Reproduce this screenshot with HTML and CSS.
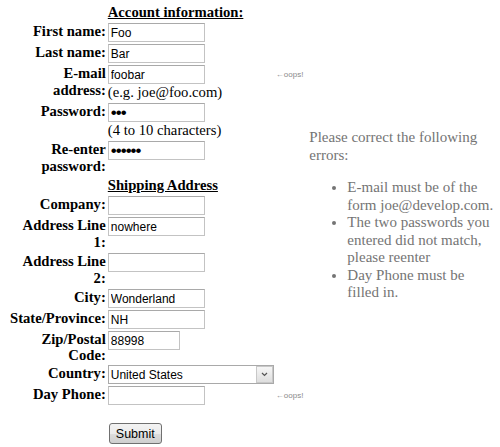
FILE: index.html
```html
<!DOCTYPE html>
<html>
<head>
<meta charset="utf-8">
<title>Signup</title>
<link rel="stylesheet" href="styles.css">
</head>
<body>
<div class="page">
  <form class="form">
    <h2 class="section">Account information:</h2>

    <label class="lbl">First name:</label>
    <div class="field"><input class="txt" type="text" value="Foo"></div>

    <label class="lbl">Last name:</label>
    <div class="field"><input class="txt" type="text" value="Bar"></div>

    <label class="lbl">E-mail address:</label>
    <div class="field"><input class="txt" type="text" value="foobar"><div class="hint">(e.g. joe@foo.com)</div></div>
    <div class="oops">&larr;oops!</div>

    <label class="lbl">Password:</label>
    <div class="field"><input class="txt pw" type="password" value="abc"><div class="hint">(4 to 10 characters)</div></div>

    <label class="lbl">Re-enter password:</label>
    <div class="field"><input class="txt pw" type="password" value="abcdef"></div>

    <h2 class="section">Shipping Address</h2>

    <label class="lbl">Company:</label>
    <div class="field"><input class="txt" type="text" value=""></div>

    <label class="lbl">Address Line 1:</label>
    <div class="field"><input class="txt" type="text" value="nowhere"></div>

    <label class="lbl">Address Line 2:</label>
    <div class="field"><input class="txt" type="text" value=""></div>

    <label class="lbl">City:</label>
    <div class="field"><input class="txt" type="text" value="Wonderland"></div>

    <label class="lbl">State/Province:</label>
    <div class="field"><input class="txt" type="text" value="NH"></div>

    <label class="lbl tight">Zip/Postal Code:</label>
    <div class="field"><input class="txt zip" type="text" value="88998"></div>

    <label class="lbl">Country:</label>
    <div class="field">
      <div class="selectwrap">
        <select class="sel"><option>United States</option></select>
        <span class="selbtn"><svg width="7" height="5" viewBox="0 0 7 5"><path d="M1 1 L3.5 3.5 L6 1" fill="none" stroke="#555" stroke-width="1.2"/></svg></span>
      </div>
    </div>

    <label class="lbl">Day Phone:</label>
    <div class="field"><input class="txt" type="text" value=""></div>
    <div class="oops">&larr;oops!</div>

    <div class="field submitrow"><button class="btn" type="button">Submit</button></div>
  </form>

  <div class="errors">
    <p class="errhead">Please correct the following errors:</p>
    <ul class="errlist">
      <li>E-mail must be of the form joe@develop.com.</li>
      <li>The two passwords you entered did not match, please reenter</li>
      <li>Day Phone must be filled in.</li>
    </ul>
  </div>
</div>
</body>
</html>
```

FILE: styles.css
```css
html, body {
  margin: 0;
  padding: 0;
  background: #ffffff;
}

body {
  font-family: "Liberation Serif", "Times New Roman", serif;
  font-size: 14.67px;
  color: #000;
}

.page {
  display: flex;
  align-items: flex-start;
  padding: 4px 0 0 10px;
}

.form {
  display: grid;
  grid-template-columns: min-content 166px auto;
  column-gap: 2px;
  row-gap: 2px;
  margin: 0;
}

.section {
  grid-column: 2 / span 2;
  margin: 0;
  font-size: 14.67px;
  font-weight: bold;
  line-height: 17px;
  text-decoration: underline;
}

.lbl {
  grid-column: 1;
  font-weight: bold;
  line-height: 17px;
  text-align: right;
}

.lbl.tight {
  line-height: 16px;
}

.field {
  grid-column: 2;
}

.oops {
  grid-column: 3;
  font-family: "Liberation Sans", Arial, sans-serif;
  font-size: 8px;
  line-height: 19px;
  color: #8a8a8a;
  padding-left: 0;
  white-space: nowrap;
}

.txt {
  display: block;
  box-sizing: border-box;
  width: 97px;
  height: 19px;
  margin: 0;
  padding: 0 2px;
  border: 1px solid #c3c3c3;
  border-top-color: #a9a9a9;
  font-family: "Liberation Sans", Arial, sans-serif;
  font-size: 12px;
  color: #000;
  background: #fff;
}

.pw {
  font-size: 17px;
  letter-spacing: -1px;
}

.zip {
  width: 72px;
}

.hint {
  line-height: 17px;
}

.selectwrap {
  position: relative;
  width: 166px;
  height: 19px;
}

.sel {
  display: block;
  box-sizing: border-box;
  width: 166px;
  height: 19px;
  margin: 0;
  padding: 0 2px;
  border: 1px solid #a9a9a9;
  border-radius: 0;
  appearance: none;
  -webkit-appearance: none;
  background: #fff;
  font-family: "Liberation Sans", Arial, sans-serif;
  font-size: 12px;
  color: #000;
}

.selbtn {
  position: absolute;
  top: 1px;
  right: 1px;
  width: 15px;
  height: 15px;
  border: 1px solid #c8c8c8;
  background: linear-gradient(#f6f6f6, #dedede);
  display: flex;
  align-items: center;
  justify-content: center;
  pointer-events: none;
}

.submitrow {
  margin-top: 16px;
}

.btn {
  box-sizing: border-box;
  width: 53px;
  height: 21px;
  margin: 0 0 0 1px;
  padding: 0;
  border: 1px solid #707070;
  border-radius: 3px;
  background: linear-gradient(#f3f3f3 0%, #ebebeb 50%, #dddddd 51%, #cfcfcf 100%);
  font-family: "Liberation Sans", Arial, sans-serif;
  font-size: 12.5px;
  color: #000;
}

.errors {
  width: 186px;
  margin-left: 6px;
  margin-top: 125px;
  font-size: 15px;
  line-height: 17.5px;
  color: #747474;
}

.errhead {
  margin: 0;
}

.errlist {
  margin: 15px 0 0;
  padding-left: 38px;
}
```
